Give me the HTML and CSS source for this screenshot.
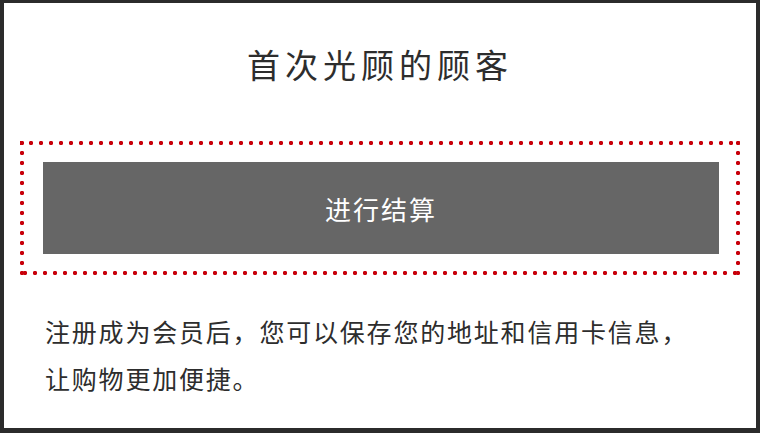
FILE: index.html
```html
<!DOCTYPE html>
<html lang="zh-CN">
  <head>
    <meta charset="UTF-8" />
    <meta name="viewport" content="width=device-width, initial-scale=1.0" />
    <title>首次光顾的顾客</title>
    <link rel="stylesheet" href="styles.css">
  </head>
  <body>
    <div class="panel">
      <h1 class="panel-title">首次光顾的顾客</h1>

      <!-- Guest checkout, framed by the red focus ring -->
      <div class="checkout">
        <button class="checkout-btn" type="button">进行结算</button>
      </div>

      <p class="note">注册成为会员后，您可以保存您的地址和信用卡信息，让购物更加便捷。</p>
    </div>
  </body>
</html>
```

FILE: styles.css
```css
body {
  margin: 0;
  font-family: "Noto Sans CJK SC", "Noto Sans", sans-serif;
  color: #2d2d2d;
}

.panel {
  box-sizing: border-box;
  width: 760px;
  height: 433px;
  border-style: solid;
  border-color: #2b2b2b;
  border-width: 3px 4px 5px 4px;
  background: #fff;
}

.panel-title {
  margin: 0;
  padding-top: 37px;
  font-size: 33px;
  font-weight: 400;
  line-height: 48px;
  letter-spacing: 5px;
  text-align: center;
  color: #2d2d2d;
}

.checkout {
  margin: 53px 16px 0;
  padding: 21px 21px 21px 23px;
  background:
    radial-gradient(circle at 2px 2px, #c8000a 1.9px, transparent 2.4px) -1px 0 / 10px 4px repeat-x,
    radial-gradient(circle at 2px 2px, #c8000a 1.9px, transparent 2.4px) 3px 100% / 10px 4px repeat-x,
    radial-gradient(circle at 2px 2px, #c8000a 1.9px, transparent 2.4px) 0 0 / 4px 10px repeat-y,
    radial-gradient(circle at 2px 2px, #c8000a 1.9px, transparent 2.4px) 100% 0 / 4px 10px repeat-y;
}

.checkout-btn {
  display: block;
  width: 100%;
  height: 92px;
  border: none;
  background: #666;
  color: #fff;
  font-family: inherit;
  font-size: 26px;
  font-weight: 400;
  letter-spacing: 2px;
  cursor: pointer;
}

.note {
  margin: 33px 0 0;
  padding: 0 60px 0 41px;
  font-size: 25px;
  font-weight: 400;
  line-height: 47px;
  letter-spacing: 1.8px;
  color: #2d2d2d;
}
```
